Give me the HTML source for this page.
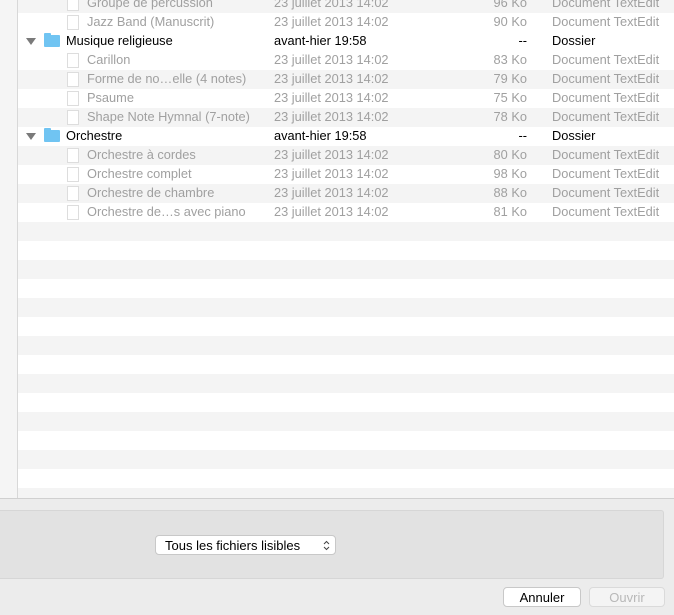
<html><head><style>
body{margin:0;width:674px;height:615px;overflow:hidden;background:#ececec;font-family:"Liberation Sans",sans-serif;font-size:12.8px;position:relative}
#tbl{position:absolute;left:0;top:0;width:674px;height:498px;background:#fff;overflow:hidden;border-bottom:1px solid #d0d0d0}
#side{position:absolute;left:0;top:0;width:17px;height:498px;background:#f5f5f5;border-right:1px solid #d8d8d8;z-index:2}
.r{position:absolute;left:0;width:674px;height:19px;line-height:18px;color:#a0a0a0}
.g{background:#f4f4f4}
.r span{position:absolute;top:0;white-space:nowrap}
.n{left:87px}.d{left:274px}.s{right:147px}.k{left:552px}
.f{color:#000}.f .n{left:66px}
.fi{position:absolute;left:67px;top:2px;width:10px;height:13px;border:1px solid #ddd;background:#fff}
.fo{position:absolute;left:44px;top:3px;width:16px;height:12px;background:#70c4f2;border-radius:1px}
.fo:before{content:"";position:absolute;left:0;top:-2px;width:7px;height:3px;background:#70c4f2;border-radius:1px 1px 0 0}
.tri{position:absolute;left:26px;top:6px;width:0;height:0;border-left:5px solid transparent;border-right:5px solid transparent;border-top:7px solid #7a7a7a}
#panel{position:absolute;left:0;top:510px;width:663px;height:67px;background:#e2e2e2;border:1px solid #d6d6d6;border-left:none;border-radius:0 3px 3px 0}
.btn{position:absolute;height:20px;line-height:19px;background:#fff;border:1px solid #c8c8c8;border-radius:4px;font-size:13px;text-align:center;box-sizing:border-box}
</style></head><body>
<div id="tbl">
<div id="side"></div>
<div class="r g" style="top:-6px"><div class="fi"></div><span class="n">Groupe de percussion</span><span class="d">23 juillet 2013 14:02</span><span class="s">96 Ko</span><span class="k">Document TextEdit</span></div>
<div class="r" style="top:13px"><div class="fi"></div><span class="n">Jazz Band (Manuscrit)</span><span class="d">23 juillet 2013 14:02</span><span class="s">90 Ko</span><span class="k">Document TextEdit</span></div>
<div class="r f" style="top:32px"><div class="tri"></div><div class="fo"></div><span class="n">Musique religieuse</span><span class="d">avant-hier 19:58</span><span class="s">--</span><span class="k">Dossier</span></div>
<div class="r" style="top:51px"><div class="fi"></div><span class="n">Carillon</span><span class="d">23 juillet 2013 14:02</span><span class="s">83 Ko</span><span class="k">Document TextEdit</span></div>
<div class="r g" style="top:70px"><div class="fi"></div><span class="n">Forme de no…elle (4 notes)</span><span class="d">23 juillet 2013 14:02</span><span class="s">79 Ko</span><span class="k">Document TextEdit</span></div>
<div class="r" style="top:89px"><div class="fi"></div><span class="n">Psaume</span><span class="d">23 juillet 2013 14:02</span><span class="s">75 Ko</span><span class="k">Document TextEdit</span></div>
<div class="r g" style="top:108px"><div class="fi"></div><span class="n">Shape Note Hymnal (7-note)</span><span class="d">23 juillet 2013 14:02</span><span class="s">78 Ko</span><span class="k">Document TextEdit</span></div>
<div class="r f" style="top:127px"><div class="tri"></div><div class="fo"></div><span class="n">Orchestre</span><span class="d">avant-hier 19:58</span><span class="s">--</span><span class="k">Dossier</span></div>
<div class="r g" style="top:146px"><div class="fi"></div><span class="n">Orchestre à cordes</span><span class="d">23 juillet 2013 14:02</span><span class="s">80 Ko</span><span class="k">Document TextEdit</span></div>
<div class="r" style="top:165px"><div class="fi"></div><span class="n">Orchestre complet</span><span class="d">23 juillet 2013 14:02</span><span class="s">98 Ko</span><span class="k">Document TextEdit</span></div>
<div class="r g" style="top:184px"><div class="fi"></div><span class="n">Orchestre de chambre</span><span class="d">23 juillet 2013 14:02</span><span class="s">88 Ko</span><span class="k">Document TextEdit</span></div>
<div class="r" style="top:203px"><div class="fi"></div><span class="n">Orchestre de…s avec piano</span><span class="d">23 juillet 2013 14:02</span><span class="s">81 Ko</span><span class="k">Document TextEdit</span></div>
<div class="r g" style="top:222px"></div>
<div class="r g" style="top:260px"></div>
<div class="r g" style="top:298px"></div>
<div class="r g" style="top:336px"></div>
<div class="r g" style="top:374px"></div>
<div class="r g" style="top:412px"></div>
<div class="r g" style="top:450px"></div>
<div class="r g" style="top:488px"></div>
</div>
<div id="panel"></div>
<div class="btn" style="left:155px;top:535px;width:181px;text-align:left;padding-left:9px">Tous les fichiers lisibles<svg style="position:absolute;right:5px;top:4px" width="7" height="11" viewBox="0 0 7 11"><path d="M1 4L3.5 1.5L6 4M1 7L3.5 9.5L6 7" fill="none" stroke="#444" stroke-width="1"/></svg></div>
<div class="btn" style="left:503px;top:587px;width:78px">Annuler</div>
<div class="btn" style="left:589px;top:587px;width:76px;color:#b8b8b8;border-color:#dadada;background:#f4f4f4">Ouvrir</div>
</body></html>
